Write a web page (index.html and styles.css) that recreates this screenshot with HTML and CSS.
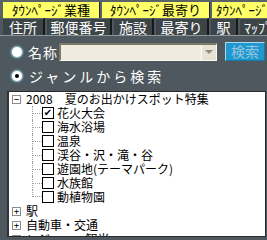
FILE: index.html
```html
<!DOCTYPE html>
<html>

<head lang="ja">
    <meta charset="UTF-8">
    <title>検索</title>
    <link rel="stylesheet" href="styles.css">
</head>

<body>

    <div class="tabs-top">
        <div class="tab-top tab-top-1">ﾀｳﾝﾍﾟｰｼﾞ業種</div>
        <div class="tab-top tab-top-2">ﾀｳﾝﾍﾟｰｼﾞ最寄り</div>
        <div class="tab-top tab-top-3">ﾀｳﾝﾍﾟｰｼﾞ</div>
    </div>

    <div class="tabs-sub">
        <div class="tab-sub w-addr">住所</div>
        <div class="tab-sub w-zip">郵便番号</div>
        <div class="tab-sub w-fac">施設</div>
        <div class="tab-sub w-near">最寄り</div>
        <div class="tab-sub w-sta">駅</div>
        <div class="tab-sub w-map">ﾏｯﾌﾟ</div>
    </div>

    <div class="search-row">
        <span class="radio"></span>
        <label class="search-label">名称</label>
        <div class="combo">
            <input type="text" class="combo-input">
            <span class="combo-btn"></span>
        </div>
        <div class="search-btn">検索</div>
    </div>

    <div class="genre-row">
        <span class="radio checked"></span>
        <label class="genre-label">ジャンルから検索</label>
    </div>

    <div class="tree">
        <div class="node">
            <span class="toggle">−</span>
            <span>2008　夏のお出かけスポット特集</span>
        </div>
        <div class="leaf"><span class="branch"></span><span class="check on">✔</span><span>花火大会</span></div>
        <div class="leaf"><span class="branch"></span><span class="check"></span><span>海水浴場</span></div>
        <div class="leaf"><span class="branch"></span><span class="check"></span><span>温泉</span></div>
        <div class="leaf"><span class="branch"></span><span class="check"></span><span>渓谷・沢・滝・谷</span></div>
        <div class="leaf"><span class="branch"></span><span class="check"></span><span>遊園地(テーマパーク)</span></div>
        <div class="leaf"><span class="branch"></span><span class="check"></span><span>水族館</span></div>
        <div class="leaf last"><span class="branch"></span><span class="check"></span><span>動植物園</span></div>
        <div class="node">
            <span class="toggle">+</span>
            <span>駅</span>
        </div>
        <div class="node">
            <span class="toggle">+</span>
            <span>自動車・交通</span>
        </div>
        <div class="node">
            <span class="toggle">+</span>
            <span>レジャー・観光</span>
        </div>
    </div>

</body>

</html>
```

FILE: styles.css
```css
html,
body,
div,
span,
label {
    padding: 0px;
    margin: 0px;
}

html {
    overflow: hidden;
}

body {
    width: 267px;
    height: 240px;
    overflow: hidden;
    background: #4e585e;
    font-family: "Noto Sans CJK JP", "DejaVu Sans", sans-serif;
}

/* top yellow tabs */
.tabs-top {
    display: flex;
    gap: 2px;
    padding: 2px 0px 0px 3px;
    height: 16px;
    background: #5a6368;
    overflow: hidden;
}

.tab-top {
    flex: none;
    height: 16px;
    line-height: 16px;
    background: #ffff66;
    border-right: 1px solid #262a2c;
    font-size: 13px;
    color: #000000;
    text-align: center;
    white-space: nowrap;
    overflow: hidden;
}

.tab-top-1 {
    width: 96px;
}

.tab-top-2 {
    width: 107px;
}

.tab-top-3 {
    width: 60px;
}

/* second row tabs */
.tabs-sub {
    display: flex;
    gap: 2px;
    padding-left: 3px;
    height: 17px;
    border-bottom: 1px solid #8e979b;
    overflow: hidden;
}

.tab-sub {
    flex: none;
    height: 16px;
    line-height: 16px;
    background: #3c4448;
    border-top: 1px solid #666e72;
    border-right: 2px solid #16191b;
    color: #ffffff;
    font-size: 14px;
    text-align: center;
    white-space: nowrap;
    overflow: hidden;
}

.w-addr {
    width: 40px;
}

.w-zip {
    width: 63px;
}

.w-fac {
    width: 38px;
}

.w-near {
    width: 51px;
}

.w-sta {
    width: 25px;
}

.w-map {
    width: 36px;
}

/* search row */
.search-row {
    display: flex;
    align-items: center;
    height: 19px;
    margin-top: 6px;
    padding-left: 12px;
}

.radio {
    flex: none;
    width: 10px;
    height: 10px;
    border-radius: 50%;
    background: #ffffff;
    box-shadow: 0px 0px 2px 1px #9fd4ee;
    display: flex;
    align-items: center;
    justify-content: center;
}

.radio.checked::after {
    content: '';
    width: 4px;
    height: 4px;
    border-radius: 50%;
    background: #000000;
}

.search-label {
    margin-left: 6px;
    width: 31px;
    color: #ffffff;
    font-size: 14px;
    letter-spacing: 1px;
}

.combo {
    display: flex;
    width: 158px;
    height: 18px;
    box-sizing: border-box;
    border-top: 2px solid #7b7968;
    border-left: 2px solid #7b7968;
    border-right: 1px solid #fbfaf3;
    border-bottom: 1px solid #fbfaf3;
    background: #efecdf;
}

.combo-input {
    flex: 1;
    min-width: 0;
    border: none;
    background: #efecdf;
    padding: 0px;
}

.combo-btn {
    width: 14px;
    background: #e6e3d5;
    border-left: 1px solid #fbfaf3;
    display: flex;
    align-items: center;
    justify-content: center;
}

.combo-btn::after {
    content: '';
    border-left: 4px solid transparent;
    border-right: 4px solid transparent;
    border-top: 4px solid #8d8b80;
}

.search-btn {
    margin-left: 8px;
    width: 38px;
    height: 17px;
    line-height: 17px;
    background: #1f97cf;
    border-top: 1px solid #a9dcef;
    border-left: 1px solid #a9dcef;
    border-right: 1px solid #167aa8;
    border-bottom: 1px solid #167aa8;
    color: #96c6e0;
    font-size: 14px;
    text-align: center;
}

/* genre row */
.genre-row {
    display: flex;
    align-items: center;
    height: 18px;
    margin-top: 6px;
    padding-left: 12px;
}

.genre-label {
    margin-left: 7px;
    color: #ffffff;
    font-size: 14px;
    letter-spacing: 3px;
}

/* tree */
.tree {
    margin: 6px 0px 0px 7px;
    width: 259px;
    height: 146px;
    box-sizing: border-box;
    background: #ffffff;
    border: 1px solid #262a2c;
    border-left: 2px solid #2f3437;
    overflow: hidden;
    font-size: 12px;
    color: #000000;
}

.node,
.leaf {
    display: flex;
    align-items: center;
    height: 14px;
    line-height: 14px;
    white-space: nowrap;
}

.node {
    padding-left: 3px;
}

.toggle {
    flex: none;
    width: 7px;
    height: 7px;
    border: 1px solid #8c8c8c;
    margin-right: 5px;
    font-size: 9px;
    line-height: 7px;
    text-align: center;
    color: #000000;
    font-family: "DejaVu Sans Mono", monospace;
}

.leaf {
    padding-left: 23px;
}

.branch {
    flex: none;
    align-self: stretch;
    width: 9px;
    border-left: 1px dotted #a0a0a0;
    display: flex;
    align-items: center;
}

.branch::after {
    content: '';
    width: 9px;
    border-top: 1px dotted #a0a0a0;
}

.leaf.last .branch {
    align-self: flex-start;
    height: 7px;
    align-items: flex-end;
}

.check {
    flex: none;
    width: 10px;
    height: 10px;
    border: 1px solid #000000;
    margin-right: 3px;
    font-size: 10px;
    line-height: 10px;
    text-align: center;
    font-family: "DejaVu Sans", sans-serif;
}
```
